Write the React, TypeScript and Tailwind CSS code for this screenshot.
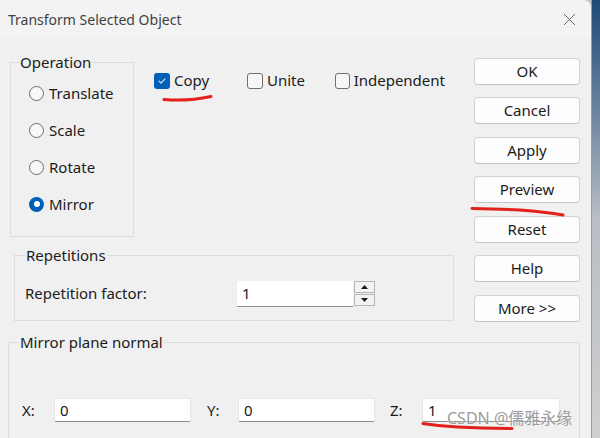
import React from "react";

const font = { fontFamily: '"Noto Sans", "Noto Sans CJK SC", sans-serif' };

const Radio = ({ label, checked }: { label: string; checked?: boolean }) => (
    <div className="flex items-center h-[20px] gap-[5px]">
        {checked ? (
            <span className="w-[15px] h-[15px] rounded-full bg-[#005fb8] flex items-center justify-center">
                <span className="w-[6px] h-[6px] rounded-full bg-white" />
            </span>
        ) : (
            <span className="w-[15px] h-[15px] rounded-full border border-[#6e6e6e] bg-[#f7f7f7]" />
        )}
        <span className="text-[15px] leading-[19px] text-[#1b1b1b]">{label}</span>
    </div>
);

const Check = ({ label, checked, width }: { label: string; checked?: boolean; width: string }) => (
    <div className={`flex items-center gap-[4px] ${width}`}>
        {checked ? (
            <span className="w-[16px] h-[16px] rounded-[3px] bg-[#005fb8] flex items-center justify-center">
                <svg width="10" height="10" viewBox="0 0 10 10" fill="none">
                    <path d="M2 5.2l2 2 4-4.4" stroke="#dfe9f5" strokeWidth="1.1" strokeLinecap="round" strokeLinejoin="round" />
                </svg>
            </span>
        ) : (
            <span className="w-[16px] h-[16px] rounded-[3px] border border-[#6e6e6e] bg-[#f7f7f7]" />
        )}
        <span className="text-[15px] leading-[19px] text-[#1b1b1b]">{label}</span>
    </div>
);

const Button = ({ label }: { label: string }) => (
    <button className="h-[27px] w-[106px] rounded-[4px] border border-[#d3d3d3] border-b-[#c2c2c2] bg-[#fdfdfd] text-[15px] text-[#1b1b1b] leading-[19px]">
        {label}
    </button>
);

const Field = ({ value, width }: { value: string; width: string }) => (
    <div className={`h-[24px] ${width} bg-white border border-[#e6e6e6] border-b-[#8e8e8e] rounded-[2px] pl-[5px] flex items-center text-[15px] text-[#1b1b1b]`}>
        {value}
    </div>
);

const App = () => {
    return (
        <div className="relative w-[600px] h-[438px] flex overflow-hidden bg-[#c8c8c8]" style={font}>
            <div className="w-[591px] h-full flex flex-col overflow-hidden bg-[#f0f0f0] rounded-tr-[8px]">
                {/* Title bar */}
                <div className="h-[38px] shrink-0 flex items-center justify-between pl-[8px] pr-[15px] bg-[#f3f3f3] rounded-tr-[8px]">
                    <span className="text-[14px] text-[#3f3f3f]">Transform Selected Object</span>
                    <svg width="13" height="13" viewBox="0 0 13 13">
                        <path d="M1 1l11 11M12 1L1 12" stroke="#6a6a6a" strokeWidth="1" />
                    </svg>
                </div>

                {/* Body */}
                <div className="flex shrink-0">
                    <div className="w-[444px] ml-[10px]">
                        <div className="flex items-start mt-[15px]">
                            <fieldset className="w-[124px] h-[184px] border border-[#dcdcdc]">
                                <legend className="ml-[8px] px-[1px] text-[15px] leading-[19px] text-[#1b1b1b]">Operation</legend>
                                <div className="flex flex-col gap-[17px] pl-[18px] mt-[11px]">
                                    <Radio label="Translate" />
                                    <Radio label="Scale" />
                                    <Radio label="Rotate" />
                                    <Radio label="Mirror" checked />
                                </div>
                            </fieldset>
                            <div className="flex ml-[20px] mt-[18px]">
                                <Check label="Copy" checked width="w-[93px]" />
                                <Check label="Unite" width="w-[88px]" />
                                <Check label="Independent" width="w-[110px]" />
                            </div>
                        </div>

                        <fieldset className="ml-[4px] mt-[8.5px] w-[440px] h-[75px] border border-[#dcdcdc]">
                            <legend className="ml-[10px] px-[1px] text-[15px] leading-[19px] text-[#1b1b1b]">Repetitions</legend>
                            <div className="flex items-center pl-[10px] mt-[16px]">
                                <span className="w-[212px] text-[15px] text-[#1b1b1b]">Repetition factor:</span>
                                <div className="h-[26px] w-[116px] bg-white border-b border-[#8e8e8e] pl-[5px] flex items-center text-[15px] text-[#1b1b1b]">1</div>
                                <div className="flex flex-col gap-[1px] ml-[1px]">
                                    <div className="w-[21px] h-[12px] border border-[#b5b5b5] bg-[#f3f3f3] flex items-center justify-center">
                                        <svg width="7" height="4" viewBox="0 0 7 4"><path d="M0 4L3.5 0L7 4z" fill="#1b1b1b" /></svg>
                                    </div>
                                    <div className="w-[21px] h-[12px] border border-[#b5b5b5] bg-[#f3f3f3] flex items-center justify-center">
                                        <svg width="7" height="4" viewBox="0 0 7 4"><path d="M0 0L3.5 4L7 0z" fill="#1b1b1b" /></svg>
                                    </div>
                                </div>
                            </div>
                        </fieldset>
                    </div>

                    <div className="ml-[20px] mt-[19.5px] flex flex-col gap-[12.5px]">
                        <Button label="OK" />
                        <Button label="Cancel" />
                        <Button label="Apply" />
                        <Button label="Preview" />
                        <Button label="Reset" />
                        <Button label="Help" />
                        <Button label="More >>" />
                    </div>
                </div>

                <fieldset className="ml-[8px] mt-[11.5px] w-[572px] h-[110px] shrink-0 border border-[#dcdcdc]">
                    <legend className="ml-[10px] px-[1px] text-[15px] leading-[19px] text-[#1b1b1b]">Mirror plane normal</legend>
                    <div className="flex items-center pl-[13px] mt-[46px] text-[15px] text-[#1b1b1b]">
                        <span className="w-[32px]">X:</span>
                        <Field value="0" width="w-[137px]" />
                        <span className="ml-[16px] w-[31px]">Y:</span>
                        <Field value="0" width="w-[137px]" />
                        <span className="ml-[15px] w-[32px]">Z:</span>
                        <Field value="1" width="w-[138px]" />
                    </div>
                </fieldset>
            </div>

            {/* window edge */}
            <div className="flex-1 border-l border-[#9a9a9a] bg-gradient-to-b from-[#1d4a77] via-[#b9bec4] to-[#cfcfcf]" />

            {/* annotations */}
            <svg className="absolute inset-0 pointer-events-none" width="600" height="438" viewBox="0 0 600 438">
                <path d="M164 99.5 Q188 101.5 211 96.5" stroke="#e3201b" strokeWidth="3" fill="none" strokeLinecap="round" />
                <path d="M472 208.5 Q500 209 520 210 Q545 212 563 215" stroke="#e3201b" strokeWidth="3" fill="none" strokeLinecap="round" />
                <path d="M423 423.5 Q450 428 512 428.5" stroke="#e3201b" strokeWidth="3" fill="none" strokeLinecap="round" />
            </svg>
            <span className="absolute left-[447px] top-[407px] text-[16px] leading-[22px] text-[#9b9b9b] [text-shadow:0_0_2px_#ffffff] pointer-events-none">
                CSDN @儒雅永缘
            </span>
        </div>
    );
};

export default App;
